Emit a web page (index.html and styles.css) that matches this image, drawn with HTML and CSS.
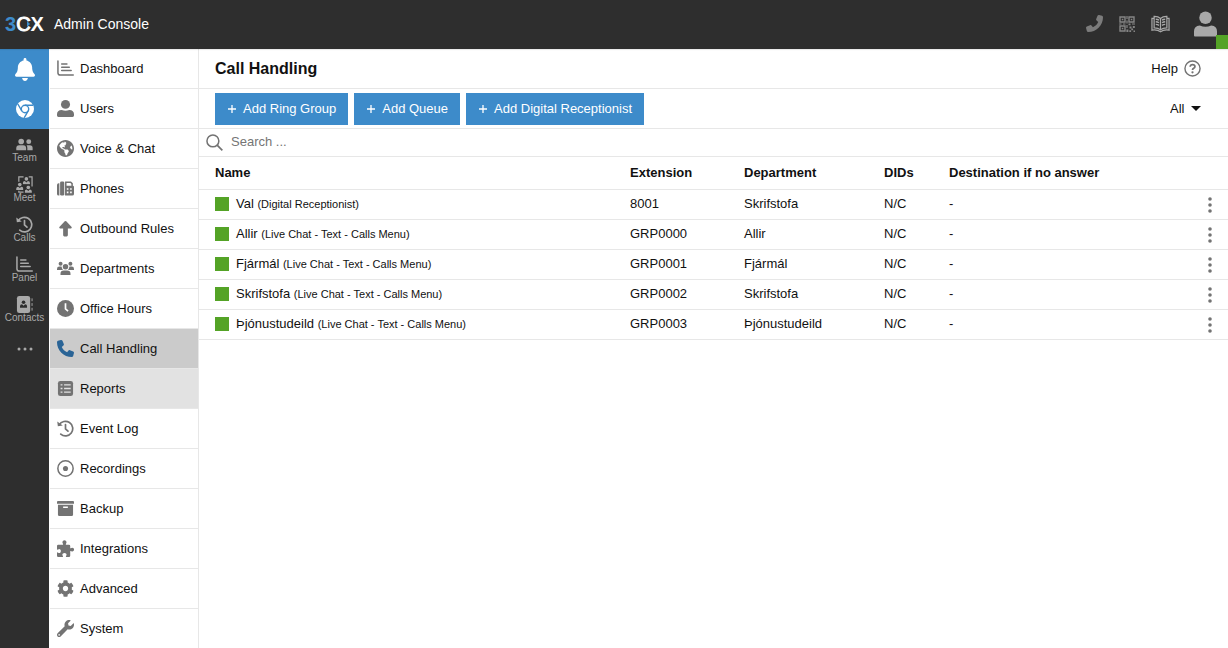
FILE: index.html
```html
<!DOCTYPE html>
<html lang="en">
<head>
    <meta charset="UTF-8">
    <meta name="viewport" content="width=device-width, initial-scale=1.0">
    <title>3CX Admin Console - Call Handling</title>
    <link rel="stylesheet" href="styles.css">
</head>
<body>
    <!-- shared icons -->
    <svg class="sprite" aria-hidden="true">
        <symbol id="i-phone" viewBox="0 0 512 512"><path d="M164.9 24.6c-7.7-18.6-28-28.5-47.4-23.2l-88 24C12.1 30.2 0 46 0 64C0 311.4 200.6 512 448 512c18 0 33.8-12.1 38.6-29.5l24-88c5.3-19.4-4.6-39.7-23.2-47.4l-96-40c-16.3-6.8-35.2-2.1-46.3 11.6L304.7 368C234.3 334.7 177.3 277.7 144 207.3L193.3 167c13.7-11.2 18.4-30 11.6-46.3l-40-96z"/></symbol>
        <symbol id="i-chart" viewBox="0 0 18 18"><path d="M1 1v12.500q0 2.500 2.500 2.500H17.200M5 4.200h5.500M5 7.700h8M5 11.200h10" fill="none" stroke="currentColor" stroke-width="1.600" stroke-linecap="round"/></symbol>
        <symbol id="i-history" viewBox="0 0 18 18"><path d="M2.300 5.200A7.700 7.700 0 1 1 4 15M9 4.800V9.500l2.600 2.300" fill="none" stroke="currentColor" stroke-width="1.800" stroke-linecap="round"/><path d="M.3 1.500l.6 5.200 5.200-.8z"/></symbol>
        <symbol id="i-plus" viewBox="0 0 8 8"><path d="M4 0v8M0 4h8" stroke="currentColor" stroke-width="1.300"/></symbol>
        <symbol id="i-kebab" viewBox="0 0 4 16"><circle cx="2" cy="2" r="1.800"/><circle cx="2" cy="8" r="1.800"/><circle cx="2" cy="14" r="1.800"/></symbol>
        <symbol id="i-person" viewBox="0 0 10 10"><circle cx="5" cy="2.600" r="2.400"/><path d="M.3 9.800V8Q.3 5.600 3 5.400L5 7.200l2-1.800Q9.700 5.600 9.700 8v1.800z"/></symbol>
        <symbol id="i-user" viewBox="0 0 18 18"><ellipse cx="9" cy="4.700" rx="4.800" ry="4.600"/><path d="M0 16.500v-1.500Q0 10.800 5 10.500q4 1.600 8 0 5 .3 5 4.500v1.500Q18 18 16.500 18h-15Q0 18 0 16.500z"/></symbol>
    </svg>

    <header class="topbar">
        <a class="brand" href="#"><span class="brand-3">3</span><span class="brand-c">C</span><span class="brand-x">X</span></a>
        <span class="console">Admin Console</span>
        <div class="top-actions">
            <button type="button" aria-label="Dialer"><svg class="icon dialer"><use href="#i-phone"/></svg></button>
            <button type="button" aria-label="QR code">
                <svg class="icon qr" viewBox="0 0 16 16">
                    <path d="M1 1h5v5H1zM10 1h5v5h-5zM1 10h5v5H1z" fill="none" stroke="currentColor" stroke-width="1.400"/>
                    <path d="M2.800 2.800h1.500v1.500H2.800zM11.800 2.800h1.500v1.500h-1.500zM2.800 11.800h1.500v1.500H2.800zM7.400 0h1.200v3H7.400zM7.400 4.500h1.200v3H7.400zM0 7.400h2.500v1.200H0zM4 7.400h2.500v1.200H4zM9.500 7.400h2v1.800h-2zM13 7.400h3v1.200h-3zM7.400 9h1.200v3H7.400zM7.400 13.500h2V16h-2zM10.500 10.500h2v2h-2zM13.800 10h2v2h-2zM12.300 12.600h1.800v1.600h-1.800zM10.300 14.300h1.800V16h-1.800zM14.500 14.500H16V16h-1.500z"/>
                </svg>
            </button>
            <button type="button" aria-label="Phonebook">
                <svg class="icon book" viewBox="0 0 20 18">
                    <path d="M10 3.200Q7.500.9 3.300 1v12.200q4.200-.1 6.700 2 2.500-2.100 6.700-2V1Q12.500.9 10 3.200zV15M3 3H1v12.500q5.500-.8 9 1.600 3.500-2.400 9-1.600V3h-2" fill="none" stroke="currentColor" stroke-width="1.300"/>
                    <path d="M5 4q2 .1 3.400 1M5 6.700q2 .1 3.400 1M5 9.400q2 .1 3.400 1M15 4q-2 .1-3.400 1M15 6.700q-2 .1-3.400 1M15 9.400q-2 .1-3.400 1" fill="none" stroke="currentColor" stroke-width="1.500"/>
                </svg>
            </button>
            <button type="button" class="account" aria-label="Account"><svg class="icon avatar" viewBox="0 0 24 26"><circle cx="12" cy="6.500" r="6.500"/><path d="M0 25v-4.500Q0 15 6 14.500q6 2.600 12 0 6 .5 6 6V25q0 1-1 1H1q-1 0-1-1z"/></svg></button>
        </div>
        <span class="presence"></span>
    </header>

    <div class="shell">
        <nav class="rail" aria-label="Apps">
            <a class="rail-item blue" href="#" aria-label="Notifications"><svg class="icon bell" viewBox="0 0 448 512"><path d="M224 512c35.320 0 63.970-28.650 63.970-64H160.030c0 35.350 28.650 64 63.970 64zm215.390-149.710c-19.320-20.760-55.470-51.990-55.470-154.290 0-77.700-54.480-139.900-127.940-155.160V32c0-17.670-14.320-32-31.980-32s-31.980 14.330-31.980 32v20.840C118.560 68.100 64.080 130.300 64.080 208c0 102.300-36.150 133.530-55.470 154.290-6 6.450-8.660 14.160-8.610 21.710.11 16.400 12.980 32 32.100 32h383.800c19.120 0 32-15.600 32.100-32 .05-7.550-2.610-15.270-8.610-21.710z"/></svg></a>
            <a class="rail-item blue" href="#" aria-label="Chrome extension">
                <svg class="icon chrome" viewBox="0 0 18 18">
                    <circle cx="9" cy="9" r="9"/>
                    <g class="cut"><circle cx="9" cy="9" r="3.700"/><path d="M9 5.300h8M5.800 10.900L1.800 4M12.200 10.900L8.200 17.800"/></g>
                </svg>
            </a>
            <a class="rail-item" href="#">
                <svg class="icon team" viewBox="0 0 18 13"><circle cx="5.500" cy="3.300" r="3"/><path d="M.3 12.500v-2q0-3.300 3-3.300h4.400q3 0 3 3.300v2z"/><circle cx="13.500" cy="3.500" r="2.600"/><path d="M12 12.500v-2.300q0-1.800-.8-3h3.500q2.900 0 2.900 3v2.300z"/></svg>
                <span>Team</span>
            </a>
            <a class="rail-item" href="#">
                <svg class="icon meet" viewBox="0 0 18 18">
                    <use href="#i-person" x="7" y="1" width="8" height="8"/>
                    <use href="#i-person" x="0" y="7" width="8" height="8"/>
                    <use href="#i-person" x="9" y="10" width="8" height="8"/>
                    <path d="M8 1H3v5M13.500 1H17v10M3 15.500V17h5" fill="none" stroke="currentColor" stroke-width="1.300"/>
                </svg>
                <span>Meet</span>
            </a>
            <a class="rail-item" href="#"><svg class="icon"><use href="#i-history"/></svg><span>Calls</span></a>
            <a class="rail-item" href="#"><svg class="icon"><use href="#i-chart"/></svg><span>Panel</span></a>
            <a class="rail-item" href="#">
                <svg class="icon" viewBox="0 0 18 18">
                    <rect x="1" y="0" width="14" height="18" rx="2.500"/>
                    <path d="M17 2.500v3M17 7.500v3M17 12.500v3" stroke="currentColor" stroke-width="1"/>
                    <g class="hole"><use href="#i-person" x="4" y="4" width="8" height="9"/></g>
                </svg>
                <span>Contacts</span>
            </a>
            <a class="rail-item" href="#" aria-label="More"><svg class="icon more" viewBox="0 0 16 4"><circle cx="2" cy="2" r="1.500"/><circle cx="8" cy="2" r="1.500"/><circle cx="14" cy="2" r="1.500"/></svg></a>
        </nav>

        <nav class="menu" aria-label="Admin">
            <a href="#"><svg class="icon"><use href="#i-chart"/></svg>Dashboard</a>
            <a href="#"><svg class="icon"><use href="#i-user"/></svg>Users</a>
            <a href="#"><svg class="icon" viewBox="0 8 496 496"><path d="M248 8C111.030 8 0 119.030 0 256s111.030 248 248 248 248-111.030 248-248S384.970 8 248 8zm82.290 357.600c-3.900 3.880-7.990 7.950-11.310 11.280-2.990 3-5.100 6.700-6.170 10.710-1.510 5.660-2.730 11.380-4.770 16.870l-17.390 46.850c-13.760 3-28 4.690-42.650 4.690v-27.380c1.690-12.620-7.640-36.260-22.630-51.250-6-6-9.370-14.140-9.370-22.630v-32.010c0-11.640-6.270-22.340-16.460-27.970-14.370-7.950-34.810-19.060-48.810-26.110-11.480-5.780-22.100-13.140-31.650-21.750l-.8-.72a114.790 114.790 0 0 1-18.060-20.740c-9.380-13.770-24.660-36.420-34.590-51.140 20.470-45.500 57.360-82.040 103.200-101.890l24.010 12.010C203.480 89.740 216 82.010 216 70.110v-11.300c7.990-1.290 16.120-2.110 24.390-2.420l28.300 28.300c6.250 6.250 6.250 16.380 0 22.630L264 112l-10.340 10.340c-3.120 3.120-3.120 8.190 0 11.310l4.690 4.690c3.120 3.120 3.120 8.190 0 11.310l-8 8a8 8 0 0 1-5.660 2.340h-8.990c-2.080 0-4.080.81-5.580 2.270l-9.920 9.650a8 8 0 0 0-1.580 9.310l15.590 31.190c2.660 5.320-1.210 11.580-7.150 11.580h-5.640c-1.930 0-3.790-.7-5.240-1.960l-9.280-8.060a16 16 0 0 0-15.550-3.100l-31.170 10.390a11.950 11.950 0 0 0-8.170 11.340c0 4.530 2.560 8.660 6.610 10.690l11.080 5.540c9.410 4.710 19.790 7.160 30.310 7.160s22.590 27.290 32 32h66.750c8.490 0 16.620 3.370 22.630 9.370l13.690 13.690a30.500 30.500 0 0 1 8.930 21.570 46.540 46.540 0 0 1-13.720 32.980zM417 274.250c-5.790-1.450-10.840-5-14.150-9.970l-17.980-26.970a23.970 23.970 0 0 1 0-26.620l19.590-29.380c2.320-3.470 5.500-6.290 9.240-8.150l12.980-6.490C440.200 193.590 448 223.870 448 256c0 8.670-.74 17.160-1.820 25.540L417 274.250z"/></svg>Voice &amp; Chat</a>
            <a href="#">
                <svg class="icon" viewBox="0 0 18 18">
                    <path d="M1.800 3.500h.7v13H1.800Q0 16.500 0 14.700V5.300q0-1.800 1.800-1.800z"/><rect x="3.300" y="1.500" width="4.400" height="15" rx="1.500"/>
                    <path fill-rule="evenodd" d="M8.500 1.500h6.300l2 2V6q1.200 0 1.200 1.500v7.200q0 1.800-1.800 1.800H8.500zM10.100 3.200v2.900h5.100V4.200l-1-1zM10.400 8.700v1.700h1.700V8.700zM13.900 8.700v1.700h1.700V8.700zM10.400 12.200v1.700h1.700v-1.700zM13.900 12.200v1.700h1.700v-1.700z"/>
                </svg>Phones</a>
            <a href="#"><svg class="icon" viewBox="0 0 18 18"><path d="M9 1q.4 0 .8.400l5.700 6.100q.6 1.300-.8 1.500H11.500v7q0 1.500-1.200 1.500H7.700q-1.200 0-1.200-1.500V9H3.300q-1.400-.2-.8-1.500l5.700-6.100Q8.600 1 9 1z"/></svg>Outbound Rules</a>
            <a href="#">
                <svg class="icon" viewBox="0 0 18 18">
                    <circle cx="3.800" cy="4" r="2.100"/><circle cx="14.200" cy="4" r="2.100"/><circle cx="9" cy="7.200" r="2.900"/>
                    <path d="M0 10.500V9.500Q0 7 2.500 7h2.300q.3 2 1.500 3.500zM18 10.500V9.500Q18 7 15.500 7h-2.300q-.3 2-1.500 3.500zM3.700 16v-1.500q0-3.500 3.500-3.500h3.600q3.500 0 3.500 3.500V16z"/>
                </svg>Departments</a>
            <a href="#"><svg class="icon" viewBox="0 0 18 18"><circle cx="9" cy="9" r="9"/><path d="M9 3.500v6l2.700 2.300" fill="none" stroke="#fff" stroke-width="1.800"/></svg>Office Hours</a>
            <a href="#" class="active" aria-current="page"><svg class="icon"><use href="#i-phone"/></svg>Call Handling</a>
            <a href="#" class="hover">
                <svg class="icon" viewBox="0 0 18 18"><rect x="1" y="1" width="16" height="16" rx="2.500"/><path d="M3.800 5.200h2M7.500 5.200H14.500M3.800 9h2M7.500 9H14.500M3.800 12.800h2M7.500 12.800H14.500" stroke="#e2e2e2" stroke-width="1.500"/></svg>Reports</a>
            <a href="#"><svg class="icon"><use href="#i-history"/></svg>Event Log</a>
            <a href="#"><svg class="icon" viewBox="0 0 18 18"><circle cx="9" cy="9" r="8.100" fill="none" stroke="currentColor" stroke-width="1.600"/><circle cx="9" cy="9" r="2.700"/></svg>Recordings</a>
            <a href="#"><svg class="icon" viewBox="0 0 18 18"><path fill-rule="evenodd" d="M1 1h16q1 0 1 1v2H0V2q0-1 1-1zM1 5h16v10.500q0 1.500-1.500 1.500h-13Q1 17 1 15.500zM6.500 7v1.500h5V7z"/></svg>Backup</a>
            <a href="#"><svg class="icon" viewBox="0 0 18 18"><path d="M0 6.300Q0 5 1.300 5h5q.4-.3-.1-1.200Q5.300 2.300 6.200 1q1.600-1.600 3.400 0 .9 1.300 0 2.800-.5.900-.1 1.200h3.200q1.300 0 1.300 1.300v2.200q.3.500 1.200 0 1.300-.7 2.400.3.900 1.400 0 2.700-1.100 1-2.400.3-.9-.5-1.200 0v4.900q0 1.300-1.300 1.300H9.800q-.7-.3-.1-1.200.8-1.200.1-2.300-1.800-1.600-3.800 0-.7 1.100.1 2.300.6.900-.1 1.200H1.300Q0 18 0 16.700v-3.200q.3-.8 1.200-.1 1.200.7 2.300 0 1.200-1.600 0-3.400-1.100-.7-2.300 0Q.3 10.600 0 9.900z"/></svg>Integrations</a>
            <a href="#"><svg class="icon" viewBox="0 0 512 512"><path d="M487.400 315.700l-42.600-24.600c4.300-23.200 4.300-47 0-70.200l42.600-24.600c4.900-2.800 7.100-8.600 5.500-14-11.100-35.600-30-67.800-54.700-94.600-3.800-4.100-10-5.100-14.800-2.300L380.800 110c-17.900-15.400-38.500-27.300-60.800-35.100V25.800c0-5.600-3.900-10.500-9.400-11.700-36.700-8.200-74.300-7.800-109.200 0-5.500 1.200-9.400 6.100-9.400 11.700V75c-22.200 7.900-42.800 19.800-60.800 35.100L88.700 85.500c-4.900-2.800-11-1.900-14.800 2.300-24.700 26.700-43.600 58.900-54.700 94.600-1.700 5.400.6 11.200 5.500 14L67.300 221c-4.300 23.200-4.300 47 0 70.200l-42.600 24.600c-4.900 2.800-7.100 8.600-5.500 14 11.100 35.600 30 67.800 54.700 94.600 3.800 4.100 10 5.100 14.800 2.300l42.600-24.600c17.900 15.400 38.500 27.300 60.800 35.100v49.200c0 5.600 3.900 10.500 9.400 11.700 36.700 8.200 74.300 7.800 109.200 0 5.500-1.200 9.400-6.100 9.400-11.700v-49.200c22.200-7.900 42.800-19.800 60.800-35.100l42.600 24.600c4.900 2.800 11 1.900 14.800-2.300 24.700-26.700 43.600-58.900 54.700-94.600 1.500-5.500-.7-11.300-5.600-14.100zM256 336c-44.100 0-80-35.900-80-80s35.900-80 80-80 80 35.900 80 80-35.900 80-80 80z"/></svg>Advanced</a>
            <a href="#"><svg class="icon" viewBox="0 0 512 512"><path d="M507.730 109.100c-2.240-9.030-13.540-12.090-20.120-5.510l-74.360 74.360-67.880-11.310-11.310-67.880 74.360-74.360c6.620-6.620 3.430-17.900-5.660-20.160-47.380-11.740-99.550.91-136.580 37.930-39.640 39.640-50.550 97.100-34.050 147.200L18.740 402.760c-24.990 24.990-24.990 65.510 0 90.500 24.990 24.990 65.510 24.990 90.500 0l213.210-213.210c50.120 16.710 107.470 5.680 147.370-34.220 37.070-37.070 49.700-89.320 37.910-136.730zM64 472c-13.250 0-24-10.750-24-24 0-13.260 10.750-24 24-24s24 10.740 24 24c0 13.250-10.750 24-24 24z"/></svg>System</a>
        </nav>

        <main class="content">
            <div class="page-head">
                <h1>Call Handling</h1>
                <a class="help" href="#">Help
                    <svg class="icon" viewBox="0 0 18 18"><circle cx="9" cy="9" r="8" fill="none" stroke="currentColor" stroke-width="1.500"/><path d="M6.500 7.200Q6.700 4.900 9.100 4.900t2.500 2q0 1.200-1.300 1.900T9 10.500" fill="none" stroke="currentColor" stroke-width="1.800"/><circle cx="9" cy="13" r="1.200"/></svg>
                </a>
            </div>

            <div class="toolbar">
                <button type="button" class="btn"><svg class="icon"><use href="#i-plus"/></svg>Add Ring Group</button>
                <button type="button" class="btn"><svg class="icon"><use href="#i-plus"/></svg>Add Queue</button>
                <button type="button" class="btn"><svg class="icon"><use href="#i-plus"/></svg>Add Digital Receptionist</button>
                <div class="filter">
                    <select aria-label="Filter"><option>All</option></select>
                    <svg class="icon" viewBox="0 0 10 5"><path d="M0 0h10L5 5z"/></svg>
                </div>
            </div>

            <label class="search">
                <svg class="icon" viewBox="0 0 18 18"><circle cx="7.300" cy="7.300" r="6.300" fill="none" stroke="currentColor" stroke-width="1.600"/><path d="M11.800 11.800l5.500 5.500" stroke="currentColor" stroke-width="1.800"/></svg>
                <input type="text" placeholder="Search ..." aria-label="Search">
            </label>

            <table class="list">
                <thead>
                    <tr>
                        <th class="col-name">Name</th>
                        <th class="col-ext">Extension</th>
                        <th class="col-dept">Department</th>
                        <th class="col-dids">DIDs</th>
                        <th class="col-dest">Destination if no answer</th>
                        <th class="col-menu"></th>
                    </tr>
                </thead>
                <tbody>
                    <tr>
                        <td><div class="name"><i class="status"></i><span>Val <small>(Digital Receptionist)</small></span></div></td>
                        <td>8001</td>
                        <td>Skrifstofa</td>
                        <td>N/C</td>
                        <td>-</td>
                        <td><button type="button" class="kebab" aria-label="Options"><svg class="icon"><use href="#i-kebab"/></svg></button></td>
                    </tr>
                    <tr>
                        <td><div class="name"><i class="status"></i><span>Allir <small>(Live Chat - Text - Calls Menu)</small></span></div></td>
                        <td>GRP0000</td>
                        <td>Allir</td>
                        <td>N/C</td>
                        <td>-</td>
                        <td><button type="button" class="kebab" aria-label="Options"><svg class="icon"><use href="#i-kebab"/></svg></button></td>
                    </tr>
                    <tr>
                        <td><div class="name"><i class="status"></i><span>Fjármál <small>(Live Chat - Text - Calls Menu)</small></span></div></td>
                        <td>GRP0001</td>
                        <td>Fjármál</td>
                        <td>N/C</td>
                        <td>-</td>
                        <td><button type="button" class="kebab" aria-label="Options"><svg class="icon"><use href="#i-kebab"/></svg></button></td>
                    </tr>
                    <tr>
                        <td><div class="name"><i class="status"></i><span>Skrifstofa <small>(Live Chat - Text - Calls Menu)</small></span></div></td>
                        <td>GRP0002</td>
                        <td>Skrifstofa</td>
                        <td>N/C</td>
                        <td>-</td>
                        <td><button type="button" class="kebab" aria-label="Options"><svg class="icon"><use href="#i-kebab"/></svg></button></td>
                    </tr>
                    <tr>
                        <td><div class="name"><i class="status"></i><span>Þjónustudeild <small>(Live Chat - Text - Calls Menu)</small></span></div></td>
                        <td>GRP0003</td>
                        <td>Þjónustudeild</td>
                        <td>N/C</td>
                        <td>-</td>
                        <td><button type="button" class="kebab" aria-label="Options"><svg class="icon"><use href="#i-kebab"/></svg></button></td>
                    </tr>
                </tbody>
            </table>
        </main>
    </div>
</body>
</html>
```

FILE: styles.css
```css
:root {
    --dark: #2e2e2e;
    --blue: #3d8bca;
    --green: #54a326;
    --line: #e7e7e7;
    --gray: #737373;
    --text: #111;
}

* {
    box-sizing: border-box;
}

body {
    margin: 0;
    min-height: 100vh;
    display: flex;
    flex-direction: column;
    font-family: "Liberation Sans", Arial, sans-serif;
    font-size: 13px;
    color: var(--text);
    background: #fff;
}

a {
    color: inherit;
    text-decoration: none;
}

button, input, select {
    font: inherit;
    color: inherit;
    border: 0;
    padding: 0;
    background: none;
}

.sprite {
    display: none;
}

.icon {
    display: block;
    flex: none;
    width: 17px;
    height: 17px;
    fill: currentColor;
}

/* top bar */
.topbar {
    position: relative;
    z-index: 1;
    display: flex;
    align-items: center;
    height: 49px;
    padding: 0 11px 2px 5px;
    color: #fff;
    background: var(--dark);
    box-shadow: 0 1px 1px rgba(0, 0, 0, 0.08);
}

.brand {
    position: relative;
    display: flex;
    width: 40px;
    font-size: 20px;
    line-height: 24px;
}

.brand-3 {
    color: var(--blue);
    font-weight: bold;
}

.brand-c {
    -webkit-text-stroke: 1px #fff;
}

.brand-x {
    font-weight: bold;
}

/* small arrow in the opening of the C */
.brand::after {
    content: "";
    position: absolute;
    left: 22px;
    top: 9px;
    border: 3px solid transparent;
    border-left-color: var(--blue);
    border-right: 0;
}

.console {
    margin-left: 9px;
    font-size: 14px;
}

.top-actions {
    display: flex;
    align-items: center;
    gap: 16px;
    margin-left: auto;
    color: #a9a9a9;
}

.dialer {
    color: #7c7c7c;
    transform: scaleX(-1);
}

.qr {
    width: 16px;
    height: 16px;
    color: #858585;
}

.book {
    width: 19px;
    height: 18px;
}

.account {
    margin-left: 8px;
}

.avatar {
    width: 23px;
    height: 26px;
}

.presence {
    position: absolute;
    right: 0;
    bottom: 0;
    width: 12px;
    height: 14px;
    background: var(--green);
}

.shell {
    flex: 1;
    display: flex;
}

/* app rail */
.rail {
    flex: none;
    width: 49px;
    color: #a9a9a9;
    background: var(--dark);
}

.rail-item {
    display: flex;
    flex-direction: column;
    align-items: center;
    justify-content: center;
    height: 40px;
    font-size: 10px;
    line-height: 10px;
}

.rail-item.blue {
    color: #fff;
    background: var(--blue);
}

.bell {
    width: 20px;
    height: 23px;
}

.chrome {
    width: 18px;
    height: 18px;
}

.chrome .cut {
    fill: none;
    stroke: var(--blue);
    stroke-width: 1.4;
}

.team {
    height: 13px;
    margin: 2px 0;
}

.hole {
    fill: var(--dark);
}

.more {
    width: 16px;
    height: 4px;
}

/* admin menu */
.menu {
    flex: none;
    width: 150px;
    padding-left: 1px;
    border-right: 1px solid var(--line);
}

.menu a {
    display: flex;
    align-items: center;
    gap: 6px;
    height: 40px;
    padding-left: 7px;
    border-bottom: 1px solid var(--line);
}

.menu a:last-child {
    border-bottom-color: transparent;
}

.menu .icon {
    color: var(--gray);
}

.menu a:hover,
.menu .hover {
    background: #e2e2e2;
}

.menu .active {
    background: #cbcbcb;
}

.menu .active .icon {
    color: #2a6496;
}

/* content */
.content {
    flex: 1;
    min-width: 0;
}

.page-head {
    display: flex;
    align-items: center;
    justify-content: space-between;
    height: 40px;
    padding: 0 27px 0 16px;
    border-bottom: 1px solid var(--line);
}

h1 {
    margin: 0;
    font-size: 16px;
}

.help {
    display: flex;
    align-items: center;
    gap: 6px;
}

.help .icon {
    color: var(--gray);
}

.toolbar {
    display: flex;
    align-items: center;
    gap: 6px;
    height: 40px;
    padding: 0 27px 0 16px;
    border-bottom: 1px solid var(--line);
}

.btn {
    display: flex;
    align-items: center;
    gap: 7px;
    height: 32px;
    padding: 0 12px 0 13px;
    color: #fff;
    background: var(--blue);
}

.btn .icon {
    width: 8px;
    height: 8px;
}

.filter {
    display: flex;
    align-items: center;
    gap: 6px;
    margin-left: auto;
}

.filter select {
    appearance: none;
}

.filter .icon {
    width: 10px;
    height: 5px;
}

.search {
    display: flex;
    align-items: center;
    gap: 8px;
    height: 28px;
    padding-left: 7px;
    color: var(--gray);
    border-bottom: 1px solid var(--line);
}

.search input {
    flex: 1;
    padding-bottom: 2px;
    outline: none;
}

.search input::placeholder {
    color: #757575;
}

.list {
    width: 100%;
    table-layout: fixed;
    border-collapse: separate;
    border-spacing: 0;
}

.list th, .list td {
    height: 30px;
    padding: 0 0 2px;
    text-align: left;
    border-bottom: 1px solid var(--line);
}

.list th {
    height: 33px;
}

.list th:first-child, .list td:first-child {
    padding-left: 16px;
}

.list td:last-child {
    padding: 0;
}

.col-ext { width: 114px; }
.col-dept { width: 140px; }
.col-dids { width: 65px; }
.col-dest { width: 243px; }
.col-menu { width: 36px; }

.name {
    display: flex;
    align-items: center;
    gap: 7px;
}

.name small {
    font-size: 11px;
}

.status {
    width: 14px;
    height: 14px;
    background: var(--green);
}

.kebab {
    display: block;
    margin-left: 16px;
}

.kebab .icon {
    width: 4px;
    height: 16px;
    color: var(--gray);
}
```
